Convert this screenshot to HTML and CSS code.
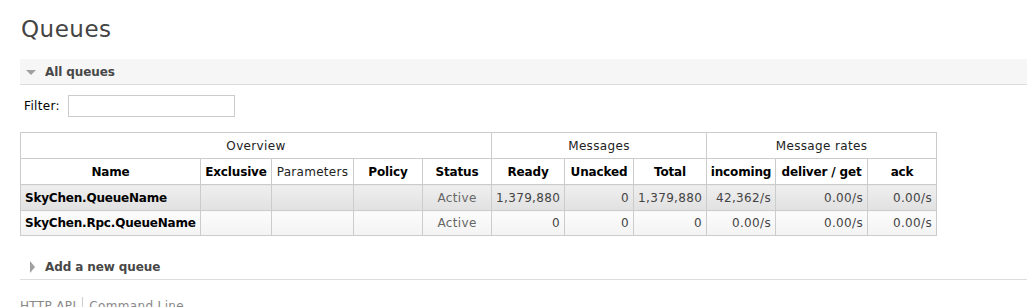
FILE: index.html
```html
<!DOCTYPE html>
<html>
<head>
<meta charset="utf-8">
<link rel="stylesheet" href="styles.css">
</head>
<body>
<div class="main">
  <h1 class="title">Queues</h1>
  <div class="section open">
    <div class="sec-head"><span class="tri tri-down"></span><span class="sec-title">All queues</span></div>
    <div class="sec-body">
      <div class="filter"><label class="filter-label">Filter:</label><input class="filter-input" type="text"></div>
      <table class="list">
        <colgroup>
          <col class="c-name"><col class="c-excl"><col class="c-params"><col class="c-policy"><col class="c-status">
          <col class="c-ready"><col class="c-unacked"><col class="c-total">
          <col class="c-in"><col class="c-del"><col class="c-ack">
        </colgroup>
        <thead>
          <tr class="grp">
            <th colspan="5">Overview</th>
            <th colspan="3">Messages</th>
            <th colspan="3">Message rates</th>
          </tr>
          <tr class="cols">
            <th>Name</th>
            <th>Exclusive</th>
            <th class="plain">Parameters</th>
            <th>Policy</th>
            <th>Status</th>
            <th>Ready</th>
            <th>Unacked</th>
            <th>Total</th>
            <th>incoming</th>
            <th>deliver / get</th>
            <th>ack</th>
          </tr>
        </thead>
        <tbody>
          <tr class="alt1">
            <td class="name">SkyChen.QueueName</td>
            <td></td><td></td><td></td>
            <td class="status">Active</td>
            <td class="num">1,379,880</td>
            <td class="num">0</td>
            <td class="num">1,379,880</td>
            <td class="num">42,362/s</td>
            <td class="num">0.00/s</td>
            <td class="num">0.00/s</td>
          </tr>
          <tr class="alt2">
            <td class="name">SkyChen.Rpc.QueueName</td>
            <td></td><td></td><td></td>
            <td class="status">Active</td>
            <td class="num">0</td>
            <td class="num">0</td>
            <td class="num">0</td>
            <td class="num">0.00/s</td>
            <td class="num">0.00/s</td>
            <td class="num">0.00/s</td>
          </tr>
        </tbody>
      </table>
    </div>
  </div>
  <div class="section closed">
    <div class="sec-head"><span class="tri tri-right"></span><span class="sec-title">Add a new queue</span></div>
  </div>
  <div class="footer"><a class="foot-link">HTTP API</a><span class="foot-sep"></span><a class="foot-link">Command Line</a></div>
</div>
</body>
</html>
```

FILE: styles.css
```css
html, body {
  margin: 0;
  padding: 0;
  background: #fff;
}
body {
  font-family: "DejaVu Sans", Verdana, sans-serif;
  font-size: 12px;
  color: #000;
  letter-spacing: 0.35px;
}
.main {
  padding: 0 0 0 20px;
}
.title {
  margin: 0;
  padding: 14px 0 0 1px;
  height: 59px;
  box-sizing: border-box;
  font-size: 23px;
  font-weight: normal;
  color: #444;
  line-height: 30px;
  letter-spacing: 0.5px;
}
.sec-head {
  display: flex;
  align-items: center;
  height: 25px;
  border-bottom: 1px solid #ddd;
}
.section.open .sec-head {
  background: #f6f6f6;
}
.sec-title {
  font-weight: bold;
  color: #484848;
  font-size: 12px;
  letter-spacing: -0.1px;
}
.tri {
  display: inline-block;
  width: 0;
  height: 0;
}
.tri-down {
  margin: 1px 9px 0 6px;
  border-left: 5px solid transparent;
  border-right: 5px solid transparent;
  border-top: 5px solid #a0a0a0;
}
.tri-right {
  margin: 0 10px 0 10px;
  border-top: 6px solid transparent;
  border-bottom: 6px solid transparent;
  border-left: 5px solid #a0a0a0;
}
.sec-body {
  padding: 10px 0 14px 0;
}
.filter {
  display: flex;
  align-items: center;
  gap: 8px;
  padding-left: 4px;
  height: 22px;
  margin-bottom: 15px;
}
.filter-label {
  color: #000;
}
.filter-input {
  width: 167px;
  height: 22px;
  box-sizing: border-box;
  border: 1px solid #ccc;
  margin: 0;
  padding: 0 2px;
}
table.list {
  border-collapse: collapse;
  border: 1px solid #ccc;
  table-layout: fixed;
  width: 917px;
}
.c-name { width: 180px; }
.c-excl { width: 71px; }
.c-params { width: 82px; }
.c-policy { width: 69px; }
.c-status { width: 69px; }
.c-ready { width: 73px; }
.c-unacked { width: 69px; }
.c-total { width: 73px; }
.c-in { width: 69px; }
.c-del { width: 92px; }
.c-ack { width: 69px; }
table.list th, table.list td {
  border: 1px solid #ccc;
  padding: 0 4px;
  font-size: 12px;
  white-space: nowrap;
  overflow: visible;
}
table.list th {
  height: 25px;
  text-align: center;
  background: #fff;
}
table.list tr.grp th {
  font-weight: normal;
  color: #222;
}
table.list tr.cols th {
  font-weight: bold;
  color: #000;
  letter-spacing: -0.15px;
  padding: 0 2px;
}
table.list tr.cols th.plain {
  font-weight: normal;
  color: #222;
  letter-spacing: 0.3px;
}
table.list td {
  height: 24px;
  color: #444;
}
table.list tr.alt1 td {
  background: linear-gradient(#efefef, #e1e1e1);
  height: 25px;
}
table.list tr.alt2 td {
  background: linear-gradient(#fcfcfc, #f3f3f3);
}
table.list td.name {
  font-weight: bold;
  color: #000;
  letter-spacing: -0.2px;
}
table.list td.status {
  text-align: center;
  color: #666;
}
table.list td.num {
  text-align: right;
}
.section.closed {
  margin-top: 4px;
}
.footer {
  display: flex;
  align-items: center;
  margin-top: 18px;
  color: #888;
  font-size: 12px;
  height: 16px;
}
.foot-link {
  color: #888;
}
.foot-sep {
  width: 1px;
  height: 18px;
  background: #ccc;
  margin: 0 6px;
}
```
